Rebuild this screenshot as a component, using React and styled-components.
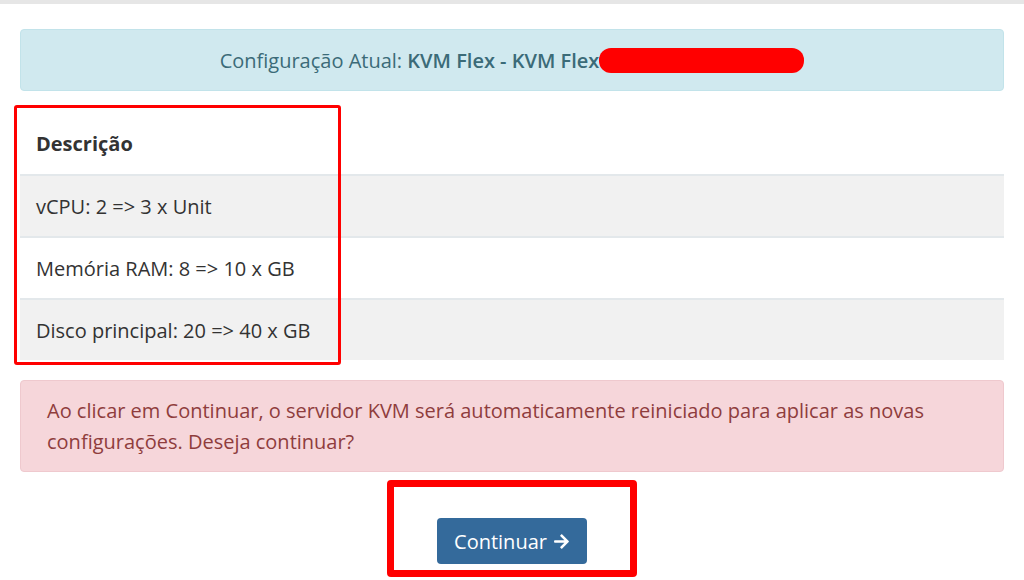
import React from 'react';
import styled, { createGlobalStyle } from 'styled-components';

const GlobalStyle = createGlobalStyle`
  body {
    margin: 0;
    background: #fff;
    font-family: "Open Sans", "DejaVu Sans", sans-serif;
    color: #333;
  }
`;

const TopBar = styled.div`
  height: 4px;
  background: #e6e6e6;
`;

const Page = styled.div`
  padding: 25px 20px 0;
`;

const Alert = styled.div`
  border: 1px solid ${p => (p.kind === 'danger' ? '#efc9ce' : '#c2e3ea')};
  background: ${p => (p.kind === 'danger' ? '#f6d6da' : '#d0e9ef')};
  color: ${p => (p.kind === 'danger' ? '#8f3d3d' : '#3b6b78')};
  border-radius: 4px;
  font-size: 20px;
`;

const InfoAlert = styled(Alert)`
  height: 60px;
  display: flex;
  align-items: center;
  justify-content: center;
  b {
    font-weight: 600;
  }
`;

const Redacted = styled.span`
  display: inline-block;
  width: 205px;
  height: 25px;
  border-radius: 12px;
  background: #ff0000;
`;

const TableArea = styled.div`
  position: relative;
  margin-top: 20px;
`;

const Table = styled.table`
  width: 100%;
  border-collapse: collapse;
  border-top: 2px solid #e3e8eb;
  font-size: 20px;
  color: #333;
`;

const Row = styled.tr`
  background: ${p => (p.striped ? '#f1f1f1' : '#fff')};
  td,
  th {
    height: 60px;
    padding: 0 16px;
    text-align: left;
    border-top: 2px solid ${p => (p.head ? 'transparent' : '#e3e8eb')};
  }
  th {
    height: 61px;
    font-weight: 700;
  }
`;

const Highlight = styled.div`
  position: absolute;
  left: -6px;
  top: -6px;
  width: 327px;
  height: 260px;
  border: 3px solid #ff0000;
  border-radius: 3px;
  box-sizing: border-box;
  pointer-events: none;
`;

const DangerAlert = styled(Alert)`
  margin-top: 20px;
  padding: 14px 26px 14px;
  line-height: 31px;
`;

const Actions = styled.div`
  display: flex;
  justify-content: center;
  padding-top: 8px;
`;

const Frame = styled.div`
  display: flex;
  justify-content: center;
  width: 250px;
  box-sizing: border-box;
  padding: 31px 0 6px;
  border: 7px solid #ff0000;
  border-radius: 4px;
`;

const Button = styled.button`
  display: flex;
  align-items: center;
  gap: 6px;
  height: 46px;
  width: 150px;
  justify-content: center;
  padding: 0;
  border: none;
  border-radius: 4px;
  background: #346a9b;
  color: #fff;
  font-family: "Open Sans", sans-serif;
  font-size: 20px;
  svg {
    width: 17px;
    height: 17px;
  }
`;

const Arrow = () => (
  <svg viewBox="0 0 448 512">
    <path
      fill="currentColor"
      d="M190.5 66.9l22.2-22.2c9.4-9.4 24.6-9.4 33.9 0L441 239c9.4 9.4 9.4 24.6 0 33.9L246.6 467.3c-9.4 9.4-24.6 9.4-33.9 0l-22.2-22.2c-9.5-9.5-9.3-25 .4-34.3L311.4 296H24c-13.3 0-24-10.7-24-24v-32c0-13.3 10.7-24 24-24h287.4L190.9 101.2c-9.8-9.3-10-24.8-.4-34.3z"
    />
  </svg>
);

const rows = [
  'vCPU: 2 => 3 x Unit',
  'Memória RAM: 8 => 10 x GB',
  'Disco principal: 20 => 40 x GB',
];

export default function App() {
  return (
    <>
      <GlobalStyle />
      <TopBar />
      <Page>
        <InfoAlert>
          <span>
            Configuração Atual: <b>KVM Flex - KVM Flex</b>
          </span>
          <Redacted />
        </InfoAlert>
        <TableArea>
          <Table>
            <tbody>
              <Row head>
                <th>Descrição</th>
              </Row>
              {rows.map((text, i) => (
                <Row key={text} striped={i % 2 === 0}>
                  <td>{text}</td>
                </Row>
              ))}
            </tbody>
          </Table>
          <Highlight />
        </TableArea>
        <DangerAlert kind="danger">
          Ao clicar em Continuar, o servidor KVM será automaticamente reiniciado para aplicar as novas
          configurações. Deseja continuar?
        </DangerAlert>
        <Actions>
          <Frame>
            <Button>
              Continuar <Arrow />
            </Button>
          </Frame>
        </Actions>
      </Page>
    </>
  );
}
